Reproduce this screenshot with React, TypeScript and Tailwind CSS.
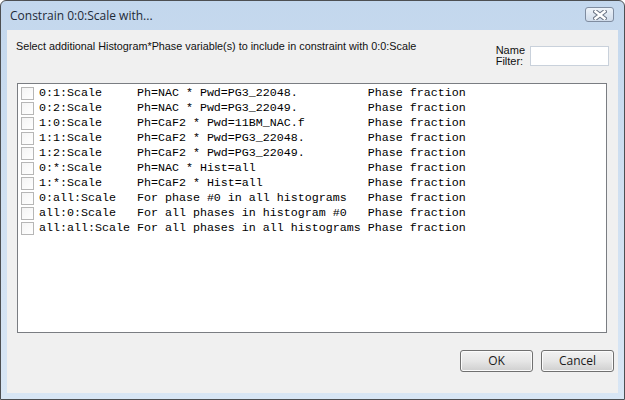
import React from "react";

const ROWS: [string, string][] = [
  ["0:1:Scale", "Ph=NAC * Pwd=PG3_22048."],
  ["0:2:Scale", "Ph=NAC * Pwd=PG3_22049."],
  ["1:0:Scale", "Ph=CaF2 * Pwd=11BM_NAC.f"],
  ["1:1:Scale", "Ph=CaF2 * Pwd=PG3_22048."],
  ["1:2:Scale", "Ph=CaF2 * Pwd=PG3_22049."],
  ["0:*:Scale", "Ph=NAC * Hist=all"],
  ["1:*:Scale", "Ph=CaF2 * Hist=all"],
  ["0:all:Scale", "For phase #0 in all histograms"],
  ["all:0:Scale", "For all phases in histogram #0"],
  ["all:all:Scale", "For all phases in all histograms"],
];

function CloseGlyph() {
  return (
    <svg width="14" height="10" viewBox="0 0 14 10">
      <path d="M2.5 1.5 L11.5 8.5 M11.5 1.5 L2.5 8.5" stroke="#6b7585" strokeWidth="4.5" strokeLinecap="square" fill="none" />
      <path d="M2.5 1.5 L11.5 8.5 M11.5 1.5 L2.5 8.5" stroke="#ffffff" strokeWidth="2.5" strokeLinecap="square" fill="none" />
    </svg>
  );
}

function DlgButton({ label }: { label: string }) {
  return (
    <button className="w-[73px] h-[22px] rounded-[3px] border border-[#707070] bg-gradient-to-b from-[#f2f2f2] via-[#e6e6e6] to-[#cfcfcf] text-[12px] text-[#1a1a1a] leading-none shadow-[inset_0_0_0_1px_#fbfbfb]">
      {label}
    </button>
  );
}

export default function App() {
  return (
    <div className="w-[625px] h-[400px] flex flex-col border border-[#4d4f52] rounded-t-[6px] bg-gradient-to-b from-[#c3d7ed] via-[#d0e0f1] to-[#d8e6f5] font-['Segoe_UI','Open_Sans',sans-serif] overflow-hidden">
      {/* title bar */}
      <div className="h-[29px] shrink-0 flex items-center pl-[9px] pr-[10px]">
        <span className="text-[12px] text-[#1e2a38] pt-[1px]">Constrain 0:0:Scale with...</span>
        <div className="ml-auto w-[29px] h-[15px] mt-[-2px] flex items-center justify-center rounded-[3px] border border-[#7f8ca0] bg-gradient-to-b from-[#eef3f9] to-[#cfdbea]">
          <CloseGlyph />
        </div>
      </div>

      {/* client area */}
      <div className="flex-1 mx-[6px] mb-[6px] bg-[#f0f0f0] flex flex-col">
        <div className="h-[53px] shrink-0 flex justify-between">
          <p className="pl-[9px] pt-[9px] font-['Liberation_Sans',sans-serif] text-[10.8px] text-[#111] leading-[14px]">
            Select additional Histogram*Phase variable(s) to include in constraint with 0:0:Scale
          </p>
          <div className="flex items-start pt-[15px] pr-[9px] gap-[5px]">
            <span className="font-['Liberation_Sans',sans-serif] text-[11px] leading-[11px] text-[#111] whitespace-pre">{"Name\nFilter:"}</span>
            <div className="w-[79px] h-[20px] mt-[1px] bg-white border border-[#c9d1db]" />
          </div>
        </div>

        <div className="ml-[10px] mr-[11px] h-[250px] bg-white border border-[#7a7d82] pt-[2px] pl-[3px]">
          {ROWS.map(([v, d]) => (
            <div key={v} className="h-[15px] flex items-center gap-[5px]">
              <span className="w-[13px] h-[13px] border border-[#b6b6b6] bg-gradient-to-br from-[#f4f4f4] to-white" />
              <span className="font-['Courier_New','Liberation_Mono',monospace] text-[11.67px] leading-none text-[#000] whitespace-pre">
                {v.padEnd(14) + d.padEnd(33) + "Phase fraction"}
              </span>
            </div>
          ))}
        </div>

        <div className="flex justify-end gap-[8px] pt-[17px] pr-[4px]">
          <DlgButton label="OK" />
          <DlgButton label="Cancel" />
        </div>
      </div>
    </div>
  );
}
